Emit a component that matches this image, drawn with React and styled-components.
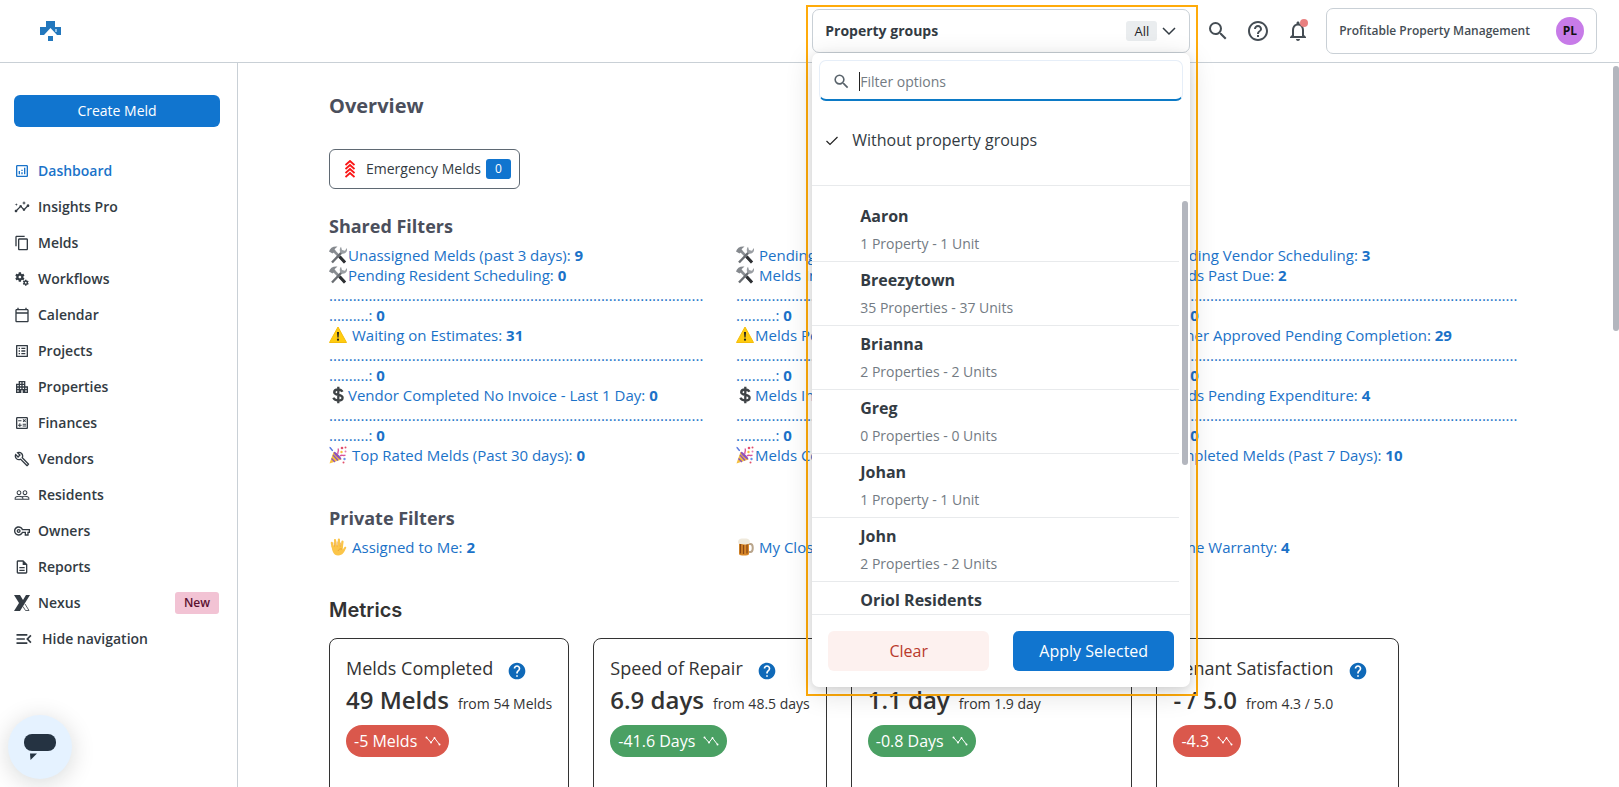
import styled, { createGlobalStyle, css } from 'styled-components'
import {
  MdApartment,
  MdContentCopy,
  MdHelp,
  MdHelpOutline,
  MdInsights,
  MdListAlt,
  MdMenuOpen,
  MdMiscellaneousServices,
  MdNotificationsNone,
  MdOutlineAnalytics,
  MdOutlineBuild,
  MdOutlineCalculate,
  MdOutlineCalendarToday,
  MdOutlineDescription,
  MdOutlineVpnKey,
  MdPeopleOutline,
  MdSearch,
} from 'react-icons/md'

const GlobalStyle = createGlobalStyle`
  * {
    box-sizing: border-box;
  }

  body {
    margin: 0;
    overflow: hidden;
    background: #fff;
    color: #333b43;
    font-family: 'Open Sans', 'Noto Sans', sans-serif;
    font-size: 14px;
    line-height: 20px;
  }

  button, input {
    font: inherit;
    color: inherit;
  }

  button {
    padding: 0;
    border: 0;
    background: none;
    cursor: pointer;
  }

  a {
    color: inherit;
    text-decoration: none;
  }

  h1, h2, h3, p, ul {
    margin: 0;
    padding: 0;
  }

  ul {
    list-style: none;
  }

  svg {
    display: block;
    flex-shrink: 0;
  }
`

const Page = styled.div`
  display: flex;
  flex-direction: column;
  height: 100vh;
`

const Header = styled.header`
  position: relative;
  z-index: 2;
  display: flex;
  align-items: flex-start;
  flex-shrink: 0;
  height: 63px;
  padding: 0 22px 0 40px;
  border-bottom: 1px solid #c9d0d6;
`

const Logo = styled.a`
  display: block;
  margin: 21px auto 0 0;
`

const HeaderTools = styled.div`
  display: flex;
  align-items: center;
  gap: 16px;
  height: 62px;
  margin-left: 8px;
`

const IconButton = styled.button`
  position: relative;
  color: #454d54;
`

const NoticeDot = styled.span`
  position: absolute;
  top: 0;
  right: 2px;
  width: 8px;
  height: 8px;
  border-radius: 50%;
  background: #e98080;
`

const Account = styled.button`
  display: flex;
  align-items: center;
  gap: 26px;
  height: 46px;
  padding: 0 12px;
  border: 1px solid #c9d0d6;
  border-radius: 7px;
  color: #454d54;
  font-size: 12px;
  font-weight: 600;
`

const Avatar = styled.span`
  width: 28px;
  border-radius: 50%;
  background: #c77be8;
  color: #111;
  font-weight: 700;
  line-height: 28px;
`

const PickerSlot = styled.div`
  position: relative;
  width: 392px;
`

/* open picker floats over the page */
const Picker = styled.div`
  position: absolute;
  top: 5px;
  left: 0;
  right: 0;
  padding: 2px 6px 7px 4px;
  border: 2px solid #ffab0a;
`

const PickerToggle = styled.button`
  display: flex;
  align-items: center;
  width: 100%;
  height: 44px;
  padding: 0 12px;
  border: 1px solid #c9d0d6;
  border-radius: 7px;
  background: #fff;
  font-weight: 700;
`

const Count = styled.span`
  margin: 0 4px 0 auto;
  padding: 0 8px;
  border-radius: 3px;
  background: #eaedef;
  color: #1f2327;
  font-size: 13px;
  font-weight: 400;
`

const Panel = styled.div`
  position: relative;
  border-radius: 7px;
  background: #fff;
  box-shadow: 0 2px 8px rgba(0, 0, 0, 0.1), 0 6px 28px rgba(0, 0, 0, 0.14);
`

const SearchArea = styled.div`
  padding: 7px 7px 0;
`

const SearchBox = styled.label`
  display: flex;
  align-items: center;
  height: 41px;
  padding: 3px 12px 0;
  border: 1px solid #e6eef8;
  border-bottom: 2px solid #0c7ac6;
  border-radius: 7px;
  color: #59636b;
`

const Caret = styled.span`
  width: 1px;
  height: 19px;
  margin-left: 8px;
  background: #222;
`

const SearchInput = styled.input`
  flex: 1;
  min-width: 0;
  padding: 0;
  border: 0;
  outline: 0;
  background: none;

  &::placeholder {
    color: #737b83;
    opacity: 1;
  }
`

const PlainOption = styled.button`
  display: flex;
  align-items: center;
  gap: 12px;
  width: 100%;
  padding: 27px 12px 33px;
  border-bottom: 1px solid #e8eaec;
  font-size: 16px;
  line-height: 24px;
`

const GroupList = styled.ul`
  height: 428px;
  padding-top: 12px;
  padding-right: 11px;
  overflow: hidden;
`

const Group = styled.li`
  border-bottom: 1px solid #e8eaec;
`

const GroupButton = styled.button`
  display: flex;
  flex-direction: column;
  gap: 6px;
  width: 100%;
  padding: 6px 48px 7px;
  text-align: left;
`

const GroupName = styled.span`
  font-size: 16px;
  font-weight: 700;
  line-height: 24px;
`

const GroupInfo = styled.span`
  color: #737b83;
`

const Thumb = styled.span`
  position: absolute;
  width: 6px;
  border-radius: 3px;
  background: #b3b6be;
  ${(props) =>
    props.$panel
      ? css`
          top: 148px;
          right: 2px;
          height: 264px;
        `
      : css`
          top: 3px;
          right: 0;
          height: 265px;
        `}
`

const PanelFooter = styled.div`
  display: flex;
  gap: 24px;
  padding: 16px;
  border-top: 1px solid #e8eaec;
`

const FooterButton = styled.button`
  flex: 1;
  height: 40px;
  border-radius: 6px;
  background: ${(props) => (props.$primary ? '#1175cf' : '#fdf1ef')};
  color: ${(props) => (props.$primary ? '#fff' : '#b93a2b')};
  font-size: 16px;
`

const Body = styled.div`
  position: relative;
  display: flex;
  flex: 1;
  min-height: 0;
`

const Sidebar = styled.aside`
  flex-shrink: 0;
  width: 238px;
  padding: 32px 17px 0 14px;
  border-right: 1px solid #c9d0d6;
`

const CreateButton = styled.button`
  width: 100%;
  height: 32px;
  margin-bottom: 26px;
  border-radius: 6px;
  background: #1175cf;
  color: #fff;
`

const NavItem = styled.a`
  display: flex;
  align-items: center;
  gap: 8px;
  height: 36px;
  color: ${(props) => (props.$active ? '#1a73c9' : '#333b43')};
  font-weight: 600;
`

const NewTag = styled.span`
  margin: 0 1px 0 auto;
  padding: 0 9px;
  border-radius: 3px;
  background: #f2c3d4;
  color: #5b1130;
  font-size: 12px;
  line-height: 22px;
`

const ChatButton = styled.button`
  position: absolute;
  left: 8px;
  bottom: 8px;
  display: flex;
  align-items: center;
  justify-content: center;
  width: 64px;
  height: 64px;
  border-radius: 50%;
  background: #e5f2ff;
  box-shadow: 0 4px 24px rgba(0, 20, 20, 0.16);
`

const Main = styled.main`
  flex: 1;
  min-width: 0;
  padding: 30px 93px 0 91px;
  overflow: hidden;
`

const Title = styled.h1`
  color: #4b4f5c;
  font-size: 20px;
  font-weight: 700;
  line-height: 26px;
`

const SectionTitle = styled.h2`
  margin-top: ${(props) => props.$top};
  color: #4b4f5c;
  font-size: 18px;
  font-weight: 700;
  line-height: 24px;
`

const Emergency = styled.button`
  display: flex;
  align-items: center;
  height: 40px;
  margin-top: 30px;
  padding: 0 8px 0 15px;
  border: 1px solid #5f6973;
  border-radius: 6px;
`

const EmergencyLabel = styled.span`
  margin: 0 5px 0 11px;
`

const EmergencyCount = styled.span`
  width: 25px;
  border-radius: 3px;
  background: #1175cf;
  color: #fff;
  font-size: 12px;
`

const FilterGrid = styled.div`
  display: grid;
  grid-template-columns: repeat(3, minmax(0, 1fr));
  column-gap: 24px;
  margin-top: ${(props) => props.$top};
`

const FilterLink = styled.a`
  display: flex;
  align-items: center;
  gap: ${(props) => (props.$spaced ? '5px' : '1px')};
  color: #1b72c8;
  font-size: 15px;
  white-space: nowrap;
`

const DividerLink = styled.a`
  display: block;
  color: #1b72c8;
  font-size: 15px;
`

const MetricsTitle = styled.h2`
  margin-top: 40px;
  color: #333;
  font-family: Inter, sans-serif;
  font-size: 20px;
  font-weight: 600;
  line-height: 26px;
`

const Cards = styled.div`
  display: flex;
  gap: 24px;
  margin-top: 15px;
`

const Card = styled.section`
  flex-shrink: 0;
  height: 240px;
  padding: 16px;
  border: 1px solid #333;
  border-radius: 8px;
  color: #333;
`

const CardHead = styled.div`
  display: flex;
  align-items: flex-end;
  gap: 14px;
  padding-right: 14px;
`

const CardTitle = styled.h3`
  font-size: 18px;
  font-weight: 400;
  line-height: 26px;
`

const HelpButton = styled.button`
  color: #0f69b8;
`

const CardValue = styled.p`
  display: flex;
  align-items: baseline;
  gap: 9px;
  margin-top: 2px;
  font-size: 24px;
  font-weight: 600;
  line-height: 34px;
`

const Previous = styled.span`
  font-size: 14px;
  font-weight: 400;
`

const Change = styled.span`
  display: inline-flex;
  align-items: center;
  gap: 8px;
  height: 32px;
  margin-top: 4px;
  padding: 0 8px;
  border-radius: 16px;
  background: ${(props) => (props.$good ? '#4aa063' : '#da584c')};
  color: #fff;
  font-size: 16px;
`

const LogoMark = () => (
  <svg width="21" height="20" viewBox="0 0 21 20" fill="#2277bd">
    <path d="M6 0h9v6h6v8h-4L10.500 7 4 14H0V6h6z" />
    <path d="M8 15h5v5H8z" />
    <path d="M15 8h2v3h-2z" fill="#8fc0e6" />
  </svg>
)

const NexusIcon = () => (
  <svg width="16" height="16" viewBox="0 0 16 16" fill="#333b43">
    <path d="M0 0h6l3 5 3-5h4l-5 8-5 8H0l5-8z" />
    <path d="M11 9l4 6.500h-3.500L9 11.500" fill="none" stroke="#333b43" strokeWidth="0.800" />
  </svg>
)

const ChevronsIcon = () => (
  <svg width="10" height="18" viewBox="0 0 10 18" fill="none" stroke="#fb1414" strokeWidth="1.800">
    <path d="M0.500 5L5 1l4.500 4M0.500 9L5 5l4.500 4M0.500 13L5 9l4.500 4M0.500 17L5 13l4.500 4" />
  </svg>
)

const CheckIcon = () => (
  <svg width="16" height="16" viewBox="0 0 16 16" fill="none" stroke="#222" strokeWidth="1.200">
    <path d="M2.500 9l3.500 3.500L13.500 5" />
  </svg>
)

const ChevronDown = () => (
  <svg width="16" height="16" viewBox="0 0 16 16" fill="none" stroke="#333b43" strokeWidth="1.500">
    <path d="M2 5l6 6 6-6" />
  </svg>
)

const TrendIcon = () => (
  <svg width="16" height="10" viewBox="0 0 16 10" fill="none" stroke="#fff">
    <path d="M1.500 1.500L6 6.500l3.500-4.500L14.500 8.500" />
    <g fill="#fff" stroke="none">
      <circle cx="1.500" cy="1.500" r="1" />
      <circle cx="6" cy="6.500" r="1" />
      <circle cx="9.500" cy="2" r="1" />
      <circle cx="14.500" cy="8.500" r="1" />
    </g>
  </svg>
)

const ChatIcon = () => (
  <svg width="32" height="26" viewBox="0 0 32 26" fill="#253342">
    <rect width="32" height="17" rx="8" />
    <path d="M6 19.500h7L6.500 26z" />
  </svg>
)

const emojiShapes = {
  tools: (
    <>
      <path d="M4.500 4.500L16 16.500" stroke="#8b8f94" strokeWidth="2.600" />
      <path d="M10.500 10.500L16 16.500" stroke="#2e3033" strokeWidth="3" />
      <path d="M13.500 5.500L3 16.500" stroke="#6a6e73" strokeWidth="2.400" />
      <path d="M0 5.500C1 2 4 0 8.500 .5L5.500 3.200 6.500 5 3.500 7.500z" fill="#85898e" />
      <path d="M12 .8l1 3.200 3 .8L17.800 2c1 3-1 5.800-4.200 5.800S10 3 12 .8z" fill="#9a9ea3" />
    </>
  ),
  warning: (
    <>
      <path d="M9 1L17.500 16.500H.5z" fill="#ffcc11" stroke="#f4bd0a" strokeLinejoin="round" />
      <path d="M8 6h2l-.4 5.500H8.400z" fill="#222" />
      <circle cx="9" cy="13.700" r="1.100" fill="#222" />
    </>
  ),
  dollar: (
    <path
      d="M13.500 5.800C12.500 4 11 3.500 9.200 3.500 7 3.500 5.200 4.500 5.200 6.200c0 3.800 8.400 1.500 8.400 5.500 0 1.700-1.900 2.800-4.300 2.800-2.200 0-4-.8-5-2.700M9.300.8v16.400"
      fill="none"
      stroke="#3f4346"
      strokeWidth="2.300"
    />
  ),
  party: (
    <>
      <path d="M4.500 6L12.500 13.500 .5 17.500z" fill="#f5bf3d" />
      <path d="M4 9l5 5.500M2.500 12.500l3.500 3.500" stroke="#8a4fc4" strokeWidth="1.300" />
      <ellipse cx="8.500" cy="9.700" rx="1.300" ry="5.200" transform="rotate(-45 8.500 9.700)" fill="#8d53bd" />
      <path d="M9 8c-1-2 1.500-3 0-5.500M11 10c2-2 3 .5 5.500-1" fill="none" stroke="#d9559b" strokeWidth="1.400" />
      <path d="M.5 1.500c2 0 1 2.500 3.500 3" fill="none" stroke="#5a79e0" strokeWidth="1.600" />
      <circle cx="13" cy="2" r="1.300" fill="#e2506c" />
      <circle cx="16.500" cy="1.500" r="1" fill="#e2506c" />
      <circle cx="16.500" cy="5.500" r="1" fill="#ea7bb0" />
      <circle cx="12.500" cy="6" r="1.200" fill="#f5bf3d" />
      <circle cx="15.500" cy="13" r="1.200" fill="#6a93e8" />
      <circle cx="14.500" cy="16.500" r="1" fill="#e2506c" />
    </>
  ),
  hand: (
    <>
      <path
        d="M3.500 8.500L2.800 4.800M6.700 8L6 2.200M9.900 8V1.500M12.800 9l.7-5.500"
        stroke="#fbc549"
        strokeWidth="2.200"
        strokeLinecap="round"
      />
      <path
        d="M2.500 7.500h11.300v4l1.500-2.200c1-1.100 2.500-.3 1.800 1-2 3.700-3.200 7.200-8 7.200C4.500 17.500 3 13 2.500 7.500z"
        fill="#fbc549"
      />
      <path d="M5 4.500l.5 4M8.200 3.500v5M11.700 4.500l-.5 4M9 13c.5-1.500 2-2.500 4-2" fill="none" stroke="#e59a2c" strokeWidth="0.700" />
    </>
  ),
  beer: (
    <>
      <path d="M12.500 6h2c3 0 3 8 0 8h-2" fill="none" stroke="#b9a58c" strokeWidth="2" />
      <path d="M3 4h10v12c0 2-10 2-10 0z" fill="#d9892a" />
      <path d="M4.500 6v9.500M7.500 7v9M11 6v9.500" stroke="#8a4714" strokeWidth="1.300" />
      <path d="M2.500 5.500C1 2 4 0 8 .5c4-.5 7 1.500 5.500 5-3 1.500-8 1-11 0z" fill="#efe9dc" />
    </>
  ),
}

const Emoji = ({ name }) => (
  <svg width="18" height="18" viewBox="0 0 18 18" aria-hidden="true">
    {emojiShapes[name]}
  </svg>
)

const navItems = [
  { label: 'Dashboard', Icon: MdOutlineAnalytics, active: true },
  { label: 'Insights Pro', Icon: MdInsights },
  { label: 'Melds', Icon: MdContentCopy },
  { label: 'Workflows', Icon: MdMiscellaneousServices },
  { label: 'Calendar', Icon: MdOutlineCalendarToday },
  { label: 'Projects', Icon: MdListAlt },
  { label: 'Properties', Icon: MdApartment },
  { label: 'Finances', Icon: MdOutlineCalculate },
  { label: 'Vendors', Icon: MdOutlineBuild },
  { label: 'Residents', Icon: MdPeopleOutline },
  { label: 'Owners', Icon: MdOutlineVpnKey },
  { label: 'Reports', Icon: MdOutlineDescription },
  { label: 'Nexus', Icon: NexusIcon, tag: 'New' },
  { label: 'Hide navigation', Icon: MdMenuOpen, iconSize: 20 },
]

const groups = [
  { name: 'Aaron', info: '1 Property - 1 Unit' },
  { name: 'Breezytown', info: '35 Properties - 37 Units' },
  { name: 'Brianna', info: '2 Properties - 2 Units' },
  { name: 'Greg', info: '0 Properties - 0 Units' },
  { name: 'Johan', info: '1 Property - 1 Unit' },
  { name: 'John', info: '2 Properties - 2 Units' },
  { name: 'Oriol Residents' },
]

const divider = { divider: true, count: 0 }

const sharedFilters = [
  [
    { emoji: 'tools', label: 'Unassigned Melds (past 3 days)', count: 9 },
    { emoji: 'tools', label: 'Pending Resident Scheduling', count: 0 },
    divider,
    { emoji: 'warning', label: 'Waiting on Estimates', count: 31, spaced: true },
    divider,
    { emoji: 'dollar', label: 'Vendor Completed No Invoice - Last 1 Day', count: 0 },
    divider,
    { emoji: 'party', label: 'Top Rated Melds (Past 30 days)', count: 0, spaced: true },
  ],
  [
    { emoji: 'tools', label: 'Pending Vendor Acceptance', count: 5, spaced: true },
    { emoji: 'tools', label: 'Melds In Progress', count: 8, spaced: true },
    divider,
    { emoji: 'warning', label: 'Melds Pending Estimates', count: 6 },
    divider,
    { emoji: 'dollar', label: 'Melds Invoiced', count: 7 },
    divider,
    { emoji: 'party', label: 'Melds Completed', count: 3 },
  ],
  [
    { emoji: 'tools', label: 'Pending Vendor Scheduling', count: 3 },
    { emoji: 'tools', label: 'Melds Past Due', count: 2 },
    divider,
    { emoji: 'warning', label: 'Owner Approved Pending Completion', count: 29 },
    divider,
    { emoji: 'dollar', label: 'Melds Pending Expenditure', count: 4 },
    divider,
    { emoji: 'party', label: 'Completed Melds (Past 7 Days)', count: 10 },
  ],
]

const privateFilters = [
  [{ emoji: 'hand', label: 'Assigned to Me', count: 2, spaced: true }],
  [{ emoji: 'beer', label: 'My Closed Melds', count: 4, spaced: true }],
  [{ emoji: 'tools', label: 'Home Warranty', count: 4 }],
]

const metrics = [
  { title: 'Melds Completed', value: '49 Melds', previous: 'from 54 Melds', change: '-5 Melds' },
  { title: 'Speed of Repair', value: '6.9 days', previous: 'from 48.5 days', change: '-41.6 Days', good: true },
  { title: 'Average Response Time', value: '1.1 day', previous: 'from 1.9 day', change: '-0.8 Days', good: true },
  { title: 'Tenant Satisfaction', value: '- / 5.0', previous: 'from 4.3 / 5.0', change: '-4.3' },
]

const Filters = ({ columns, top }) => (
  <FilterGrid $top={top}>
    {columns.map((filters, column) => (
      <ul key={column}>
        {filters.map((filter, index) => (
          <li key={index}>
            {filter.divider ? (
              <DividerLink href="#">
                {'.'.repeat(95)}
                <br />
                {'.'.repeat(10)}: <b>{filter.count}</b>
              </DividerLink>
            ) : (
              <FilterLink href="#" $spaced={filter.spaced}>
                <Emoji name={filter.emoji} />
                <span>
                  {filter.label}: <b>{filter.count}</b>
                </span>
              </FilterLink>
            )}
          </li>
        ))}
      </ul>
    ))}
  </FilterGrid>
)

const PropertyGroups = () => (
  <PickerSlot>
    <Picker>
      <PickerToggle aria-expanded="true">
        Property groups
        <Count>All</Count>
        <ChevronDown />
      </PickerToggle>
      <Panel>
        <SearchArea>
          <SearchBox>
            <MdSearch size={19} />
            <Caret />
            <SearchInput type="text" placeholder="Filter options" aria-label="Filter options" />
          </SearchBox>
        </SearchArea>
        <PlainOption>
          <CheckIcon />
          Without property groups
        </PlainOption>
        <GroupList>
          {groups.map((group) => (
            <Group key={group.name}>
              <GroupButton>
                <GroupName>{group.name}</GroupName>
                {group.info && <GroupInfo>{group.info}</GroupInfo>}
              </GroupButton>
            </Group>
          ))}
        </GroupList>
        <Thumb $panel />
        <PanelFooter>
          <FooterButton>Clear</FooterButton>
          <FooterButton $primary>Apply Selected</FooterButton>
        </PanelFooter>
      </Panel>
    </Picker>
  </PickerSlot>
)

const App = () => (
  <>
    <GlobalStyle />
    <Page>
      <Header>
        <Logo href="#" aria-label="Home">
          <LogoMark />
        </Logo>
        <PropertyGroups />
        <HeaderTools>
          <IconButton aria-label="Search">
            <MdSearch size={24} />
          </IconButton>
          <IconButton aria-label="Help">
            <MdHelpOutline size={24} />
          </IconButton>
          <IconButton aria-label="Notifications">
            <MdNotificationsNone size={24} />
            <NoticeDot />
          </IconButton>
          <Account>
            Profitable Property Management
            <Avatar>PL</Avatar>
          </Account>
        </HeaderTools>
      </Header>
      <Body>
        <Sidebar>
          <CreateButton>Create Meld</CreateButton>
          <nav>
            {navItems.map(({ label, Icon, iconSize = 16, active, tag }) => (
              <NavItem key={label} href="#" $active={active}>
                <Icon size={iconSize} />
                {label}
                {tag && <NewTag>{tag}</NewTag>}
              </NavItem>
            ))}
          </nav>
          <ChatButton aria-label="Chat">
            <ChatIcon />
          </ChatButton>
        </Sidebar>
        <Main>
          <Title>Overview</Title>
          <Emergency>
            <ChevronsIcon />
            <EmergencyLabel>Emergency Melds</EmergencyLabel>
            <EmergencyCount>0</EmergencyCount>
          </Emergency>
          <SectionTitle $top="25px">Shared Filters</SectionTitle>
          <Filters columns={sharedFilters} top="7px" />
          <SectionTitle $top="41px">Private Filters</SectionTitle>
          <Filters columns={privateFilters} top="7px" />
          <MetricsTitle>Metrics</MetricsTitle>
          <Cards>
            {metrics.map((metric) => (
              <Card key={metric.title}>
                <CardHead>
                  <CardTitle>{metric.title}</CardTitle>
                  <HelpButton aria-label={`About ${metric.title}`}>
                    <MdHelp size={20} />
                  </HelpButton>
                </CardHead>
                <CardValue>
                  {metric.value}
                  <Previous>{metric.previous}</Previous>
                </CardValue>
                <Change $good={metric.good}>
                  {metric.change}
                  <TrendIcon />
                </Change>
              </Card>
            ))}
          </Cards>
        </Main>
        <Thumb />
      </Body>
    </Page>
  </>
)

export default App
